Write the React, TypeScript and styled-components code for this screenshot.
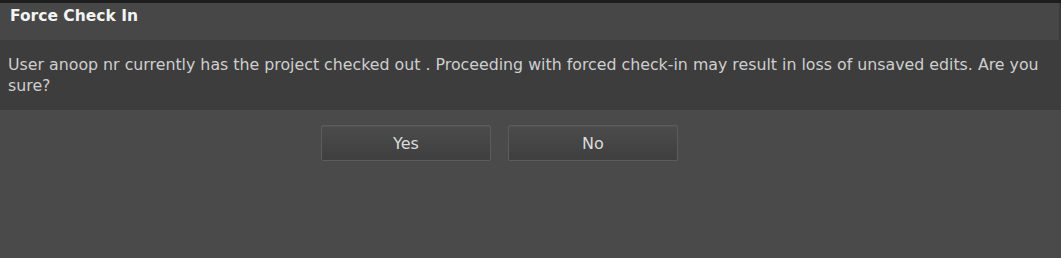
import React from 'react';
import styled, { createGlobalStyle } from 'styled-components';

const GlobalStyle = createGlobalStyle`
  html, body {
    margin: 0;
    padding: 0;
    background: #4a4a4a;
  }
  body {
    font-family: "DejaVu Sans", Verdana, sans-serif;
  }
`;

const Dialog = styled.div`
  width: 1061px;
  height: 258px;
  background: #4a4a4a;
  border-top: 3px solid #1d1d1d;
  box-sizing: border-box;
  display: flex;
  flex-direction: column;
`;

const Header = styled.div`
  height: 37px;
  box-sizing: border-box;
  padding: 3px 10px 0;
  background: #474747;
  border-right: 2px solid #3a3a3a;
  color: #f4f4f4;
  font-weight: bold;
  font-size: 15.5px;
  line-height: 21px;
`;

const Message = styled.div`
  height: 70px;
  box-sizing: border-box;
  padding: 14px 8px;
  background: #3d3d3d;
  color: #cfcfcf;
  font-size: 15.8px;
  line-height: 21px;
`;

const ButtonRow = styled.div`
  display: flex;
  justify-content: center;
  gap: 17px;
  padding: 15px 62px 0 0;
`;

const Button = styled.button`
  width: 170px;
  height: 36px;
  box-sizing: border-box;
  border: 1px solid #5c5c5c;
  border-radius: 2px;
  background: linear-gradient(#4b4b4b, #3f3f3f);
  box-shadow: inset 0 1px 0 #525252;
  color: #dcdcdc;
  font-family: "DejaVu Sans", Verdana, sans-serif;
  font-size: 16px;
  line-height: 34px;
  padding: 1px 0 0;
  cursor: pointer;
`;

export default function App() {
  return (
    <>
      <GlobalStyle />
      <Dialog>
        <Header>Force Check In</Header>
        <Message>
          User anoop nr currently has the project checked out . Proceeding with forced check-in may result in loss of
          unsaved edits. Are you sure?
        </Message>
        <ButtonRow>
          <Button>Yes</Button>
          <Button>No</Button>
        </ButtonRow>
      </Dialog>
    </>
  );
}
